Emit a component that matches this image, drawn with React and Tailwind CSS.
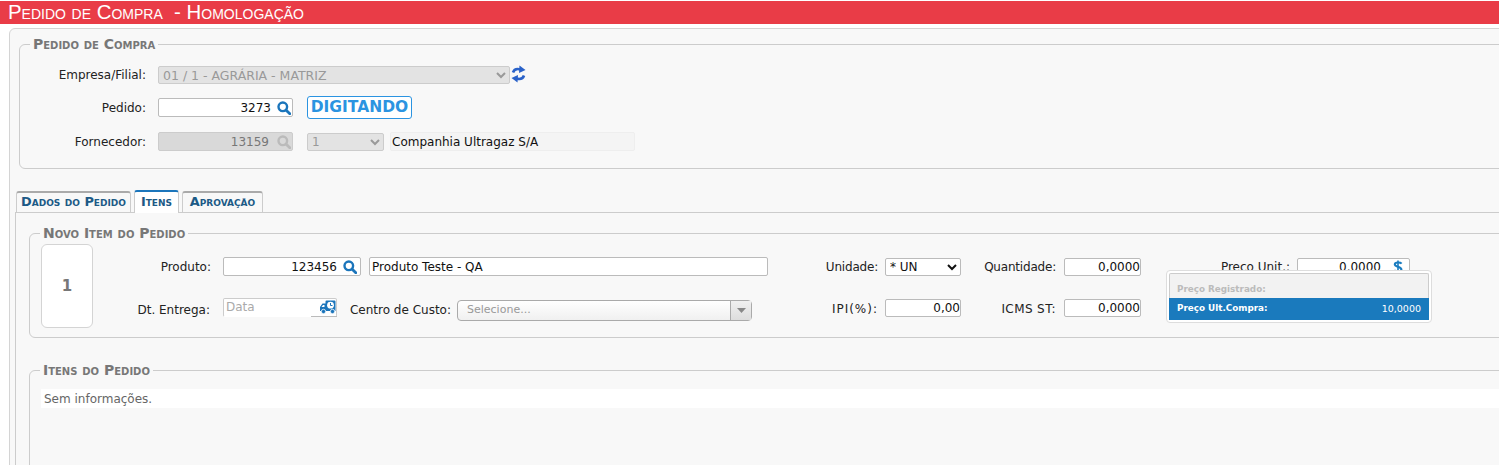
const FONT = "font-['DejaVu_Sans',sans-serif]";

function SearchIcon({ color = '#1b75bb', className = '' }) {
  return (
    <svg width="14" height="14" viewBox="0 0 14 14" className={`shrink-0 ${className}`} fill="none">
      <circle cx="5.8" cy="5.8" r="4.3" stroke={color} strokeWidth="2.4" />
      <path d="M9.2 9.2L12.8 12.8" stroke={color} strokeWidth="2.8" strokeLinecap="round" />
    </svg>
  );
}

function RefreshIcon() {
  return (
    <svg width="15" height="18" viewBox="0 0 15 18" className="shrink-0" fill="none">
      <path d="M2 7.5C3 4.5 6 3.5 9.5 4.5" stroke="#2a62c9" strokeWidth="2.6" />
      <path d="M8.5 0.5L14.5 5L8 8z" fill="#2a62c9" />
      <path d="M13 10.5C12 13.5 9 14.5 5.5 13.5" stroke="#2a62c9" strokeWidth="2.6" />
      <path d="M6.5 17.5L0.5 13L7 10z" fill="#2a62c9" />
    </svg>
  );
}

function TruckIcon() {
  return (
    <svg width="16" height="14" viewBox="0 0 16 14" className="shrink-0">
      <path d="M0 11V7L2.5 3.5H5.5V1.5Q5.5 0.5 6.5 0.5H14.5Q15.5 0.5 15.5 1.5V11z" fill="#1b75bb" />
      <path d="M1.5 7L3 5H4.5V7z" fill="#fff" />
      <circle cx="10.5" cy="5.2" r="3.4" fill="#fff" />
      <path d="M10.5 3V5.5H12.5" stroke="#1b75bb" strokeWidth="1" fill="none" />
      <circle cx="3.5" cy="11.5" r="2.2" fill="#1b75bb" stroke="#fff" strokeWidth="0.8" />
      <circle cx="12.5" cy="11.5" r="2.2" fill="#1b75bb" stroke="#fff" strokeWidth="0.8" />
    </svg>
  );
}

function DollarIcon() {
  return (
    <svg width="10" height="14" viewBox="0 0 10 14" className="shrink-0" fill="none">
      <path d="M8.6 3.6C7.6 2.4 2 1.8 1.8 4.4C1.6 7 8.6 6.6 8.4 9.6C8.2 12.2 2.6 11.8 1.2 10.2" stroke="#1b7dc0" strokeWidth="2.1" />
      <path d="M5 0.5V13.5" stroke="#1b7dc0" strokeWidth="1.6" />
    </svg>
  );
}

function Label({ w, className = '', children }) {
  return <span className={`shrink-0 text-right text-[12px] text-[#222] ${w} ${className}`}>{children}</span>;
}

function Box({ w, h = 'h-[19px]', bg = 'bg-white', text = 'text-[#111]', border = 'border-[#bbb]', align = 'text-right', icon, pad = 'pr-0', className = '', children }) {
  return (
    <div className={`flex shrink-0 items-center rounded-[2px] border pl-[2px] text-[12px] ${w} ${h} ${bg} ${text} ${border} ${pad} ${className}`}>
      <span className={`flex-1 whitespace-nowrap ${align}`}>{children}</span>
      {icon}
    </div>
  );
}

function Legend({ children }) {
  return (
    <legend className="ml-[10px] px-[3px] text-[14px] leading-[14px] font-bold text-[#777] [font-variant:small-caps]">
      {children}
    </legend>
  );
}

export default function App() {
  return (
    <div className={`h-[465px] w-[1499px] overflow-hidden bg-white ${FONT}`}>
      <div className="mt-px h-[23px] bg-[#e93c47] pl-[8px] font-['Liberation_Sans',sans-serif] text-[20.4px] leading-[23px] whitespace-pre text-white [font-variant:small-caps]">
        Pedido de Compra  - Homologação
      </div>

      <div className="mt-[4px] ml-[9px] h-[500px] w-[1540px] rounded-tl-md border border-[#d4d4d4] bg-[#f8f8f8] pt-[8px] pl-[9px]">
        <fieldset className="h-[132px] rounded-md border border-[#ccc]">
          <Legend>Pedido de Compra</Legend>
          <div className="mt-[14px] flex h-[19px] items-center">
            <Label w="w-[126px]">Empresa/Filial:</Label>
            <select disabled className="ml-[12px] h-[18px] w-[352px] rounded-[2px] border border-[#ccc] bg-[#e3e3e3] text-[12.5px] text-[#999]">
              <option>01 / 1 - AGRÁRIA - MATRIZ</option>
            </select>
            <span className="ml-[1px] -translate-y-[1px]"><RefreshIcon /></span>
          </div>
          <div className="mt-[13px] flex h-[21px] items-center">
            <Label w="w-[126px]">Pedido:</Label>
            <div className="ml-[12px]">
              <Box w="w-[135px]" pad="pr-[1px]" icon={<SearchIcon className="ml-[6px]" />}>3273</Box>
            </div>
            <div className="ml-[14px] flex h-[23px] w-[105px] items-center justify-center rounded-[3px] border border-[#2b94e1] bg-white text-[15.5px] font-bold text-[#2b94e1]">
              DIGITANDO
            </div>
          </div>
          <div className="mt-[14px] flex h-[19px] items-center">
            <Label w="w-[126px]">Fornecedor:</Label>
            <div className="ml-[12px]">
              <Box w="w-[135px]" bg="bg-[#d9d9d9]" text="text-[#777]" border="border-[#ccc]" pad="pr-[1px]" icon={<SearchIcon color="#bbb" className="ml-[8px]" />}>13159</Box>
            </div>
            <select disabled className="ml-[14px] h-[18px] w-[77px] rounded-[2px] border border-[#ccc] bg-[#e3e3e3] text-[12px] text-[#999]">
              <option>1</option>
            </select>
            <div className="ml-[6px]">
              <Box w="w-[245px]" bg="bg-[#f4f4f4]" border="border-[#eee]" align="text-left" className="pl-px">Companhia Ultragaz S/A</Box>
            </div>
          </div>
        </fieldset>

        <div className="mt-[21px] ml-[-4px]">
          <div className="flex h-[22px] items-end gap-[3px] pl-px">
            <div className="h-[21px] w-[115px] rounded-t-[3px] border border-t-2 border-b-0 border-[#ccc] border-t-[#aaa] text-center text-[12.9px] leading-[17px] font-bold whitespace-nowrap text-[#1c5a86] [font-variant:small-caps]">Dados do Pedido</div>
            <div className="relative z-10 mb-[-1px] h-[23px] w-[45px] rounded-t-[3px] border border-t-2 border-b-0 border-[#ccc] border-t-[#1b75bb] bg-white text-center text-[12.9px] leading-[19px] font-bold text-[#1c5a86] [font-variant:small-caps]">Itens</div>
            <div className="h-[21px] w-[81px] rounded-t-[3px] border border-t-2 border-b-0 border-[#ccc] border-t-[#aaa] text-center text-[12.9px] leading-[17px] font-bold text-[#1c5a86] [font-variant:small-caps]">Aprovação</div>
          </div>

          <div className="h-[300px] border-t border-l border-[#ccc] pt-[13px] pl-[13px]">
            <fieldset className="relative h-[112px] rounded-md border border-[#ccc]">
              <Legend>Novo Item do Pedido</Legend>
              <div className="flex pt-[4px] pl-[11px]">
                <div className="flex h-[84px] w-[52px] shrink-0 items-center justify-center rounded-md border border-[#d4d4d4] bg-white text-[15px] font-bold text-[#777]">1</div>
                <div className="flex flex-col">
                  <div className="mt-[13px] flex h-[19px] items-center">
                    <Label w="w-[118px]">Produto:</Label>
                    <div className="ml-[12px]"><Box w="w-[138px]" pad="pr-[3px]" icon={<SearchIcon className="ml-[6px]" />}>123456</Box></div>
                    <div className="ml-[8px]"><Box w="w-[399px]" align="text-left">Produto Teste - QA</Box></div>
                    <Label w="w-[110px]" className="tracking-[-0.2px]">Unidade:</Label>
                    <select className="ml-[7px] h-[18px] w-[76px] rounded-[2px] border border-[#bbb] bg-white text-[12px] text-[#111]">
                      <option>* UN</option>
                    </select>
                    <Label w="w-[95px]" className="tracking-[-0.2px]">Quantidade:</Label>
                    <div className="ml-[8px]"><Box w="w-[77px]" h="h-[18px]">0,0000</Box></div>
                    <Label w="w-[149px]">Preco Unit.:</Label>
                    <div className="ml-[7px]">
                      <Box w="w-[113px]" h="h-[18px]" pad="pr-[6px]" icon={<DollarIcon />} className="gap-[12px]">0.0000</Box>
                    </div>
                  </div>
                  <div className="mt-[22px] flex h-[22px] items-center">
                    <Label w="w-[117px]" className="mt-[2px]">Dt. Entrega:</Label>
                    <div className="relative mb-[4px] ml-[13px]">
                      <Box w="w-[114px]" text="text-[#aaa]" align="text-left" border="border-[#ccc] border-b-transparent" icon={<TruckIcon />}>Data</Box>
                      <span className="absolute right-0 bottom-0 h-px w-[26px] bg-[#bbb]" />
                    </div>
                    <Label w="w-[114px]" className="mt-[2px]">Centro de Custo:</Label>
                    <div className="mt-[2px] ml-[6px] flex h-[21px] w-[295px] shrink-0 items-center rounded-[4px] border border-[#aaa] bg-gradient-to-b from-white to-[#f0f0f0] text-[11px] text-[#999]">
                      <span className="flex-1 pl-[9px]">Selecione...</span>
                      <span className="flex h-full w-[21px] items-center justify-center border-l border-[#aaa] bg-gradient-to-b from-[#f0f0f0] to-[#ddd]">
                        <svg width="9" height="5" viewBox="0 0 9 5"><path d="M0 0h9L4.5 5z" fill="#888" /></svg>
                      </span>
                    </div>
                    <Label w="w-[126px]" className="tracking-[1px]">IPI(%):</Label>
                    <div className="mb-[2px] ml-[7px]"><Box w="w-[76px]" h="h-[18px]">0,00</Box></div>
                    <Label w="w-[95px]" className="tracking-[0.4px]">ICMS ST:</Label>
                    <div className="mb-[2px] ml-[8px]"><Box w="w-[77px]" h="h-[18px]">0,0000</Box></div>
                  </div>
                </div>
              </div>
              <div className="absolute top-[30px] left-[1136px] w-[266px] rounded-[4px] border border-[#ddd] bg-white p-[2px] text-[8.8px] font-bold">
                <div className="rounded-t-[2px] border border-b-0 border-[#ccc] bg-[#f2f2f2] px-[7px] pt-[9px] pb-[3px] leading-[12px] text-[#bbb]">Preço Registrado:</div>
                <div className="flex h-[22px] items-center justify-between bg-[#1a7abd] px-[8px] text-white">
                  <span>Preço Ult.Compra:</span>
                  <span className="text-[9.5px] font-normal">10,0000</span>
                </div>
              </div>
            </fieldset>

            <fieldset className="mt-[25px] h-[200px] rounded-md border border-[#ccc]">
              <Legend>Itens do Pedido</Legend>
              <div className="mt-[12px] ml-[11px] h-[19px] bg-white pl-[3px] text-[12px] leading-[20px] text-[#666]">Sem informações.</div>
            </fieldset>
          </div>
        </div>
      </div>
    </div>
  );
}
